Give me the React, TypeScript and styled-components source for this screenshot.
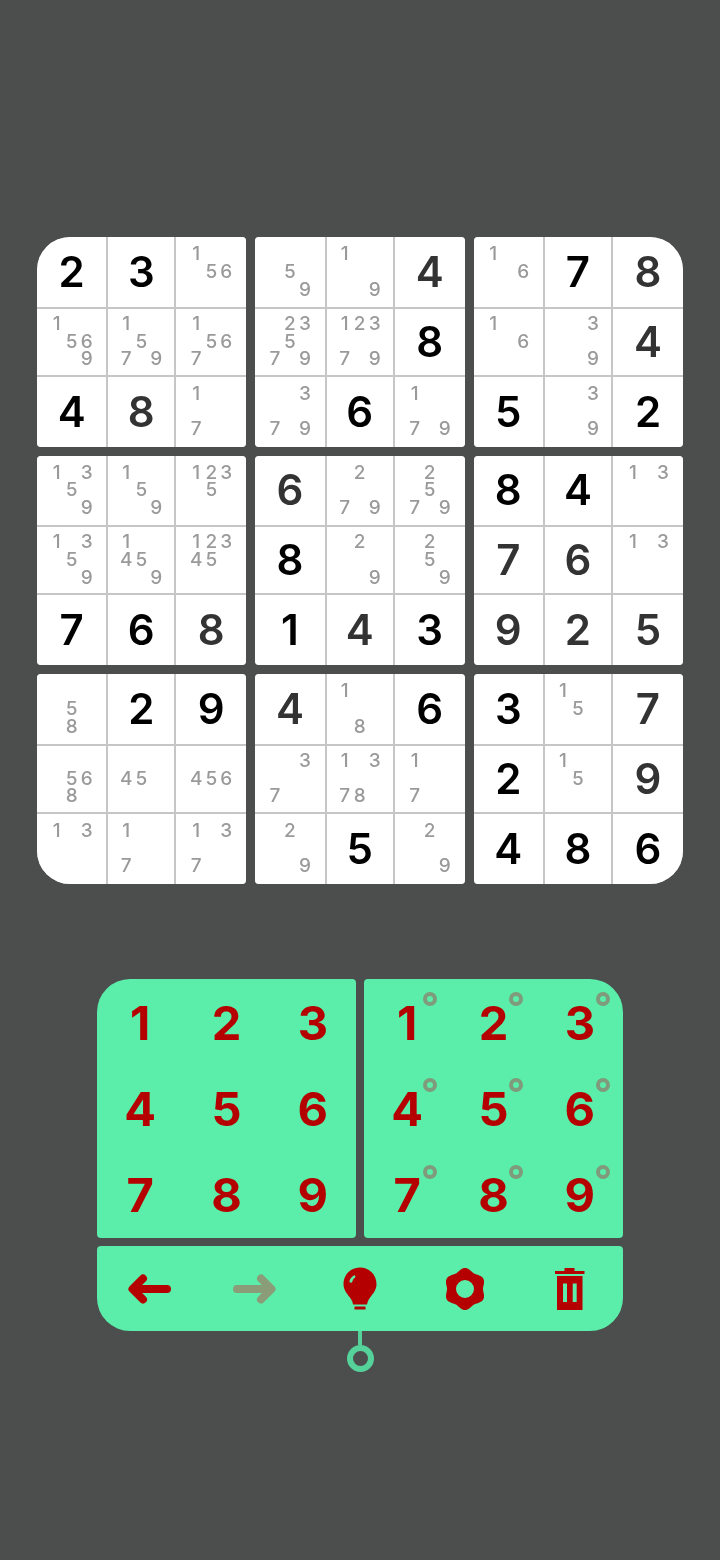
import React from 'react';
import styled, { createGlobalStyle } from 'styled-components';

const colors = {
  background: '#4c4e4e',
  line: '#c6c6c6',
  note: '#9a9a9a',
  black: '#000000',
  dark: '#333333',
  green: '#5bedaa',
  red: '#b40000',
  muted: '#8b9c79',
  mark: '#7f9b7c',
  indicator: '#55d29a',
};

// b = given (black), d = placed (dark grey), n = pencil marks
const rows = [
  ['b2', 'b3', 'n156', 'n59', 'n19', 'd4', 'n16', 'b7', 'd8'],
  ['n1569', 'n1579', 'n1567', 'n23579', 'n12379', 'b8', 'n16', 'n39', 'd4'],
  ['b4', 'd8', 'n17', 'n379', 'b6', 'n179', 'b5', 'n39', 'b2'],
  ['n1359', 'n159', 'n1235', 'd6', 'n279', 'n2579', 'b8', 'b4', 'n13'],
  ['n1359', 'n1459', 'n12345', 'b8', 'n29', 'n259', 'd7', 'd6', 'n13'],
  ['b7', 'b6', 'd8', 'b1', 'd4', 'b3', 'd9', 'd2', 'd5'],
  ['n58', 'b2', 'b9', 'd4', 'n18', 'b6', 'b3', 'n15', 'd7'],
  ['n568', 'n45', 'n456', 'n37', 'n1378', 'n17', 'b2', 'n15', 'd9'],
  ['n13', 'n17', 'n137', 'n29', 'b5', 'n29', 'b4', 'b8', 'b6'],
];

const boxRadius: Record<number, string> = {
  0: '33px 4px 4px 4px',
  2: '4px 33px 4px 4px',
  6: '4px 4px 4px 33px',
  8: '4px 4px 33px 4px',
};

const digits = ['1', '2', '3', '4', '5', '6', '7', '8', '9'];

function cellsOfBox(box: number) {
  const top = Math.floor(box / 3) * 3;
  const left = (box % 3) * 3;
  return [0, 1, 2].flatMap((r) => [0, 1, 2].map((c) => rows[top + r][left + c]));
}

function gearPath() {
  const points: string[] = [];
  for (let i = 0; i < 120; i++) {
    const angle = (i / 120) * Math.PI * 2;
    const radius = 19.5 + 1.5 * Math.cos(6 * angle);
    const x = 20 + radius * Math.sin(angle);
    const y = 21 - radius * Math.cos(angle);
    points.push(`${x.toFixed(2)} ${y.toFixed(2)}`);
  }
  return `M${points.join('L')}Z M29 21A9 9 0 1 0 11 21A9 9 0 1 0 29 21Z`;
}

function Cell({ value }: { value: string }) {
  const kind = value[0];
  const body = value.slice(1);
  if (kind === 'n') {
    return (
      <CellBox>
        <NoteGrid>
          {digits.map((d) => (
            <Note key={d}>{body.includes(d) ? d : ''}</Note>
          ))}
        </NoteGrid>
      </CellBox>
    );
  }
  return (
    <CellBox>
      <Value $dark={kind === 'd'}>{body}</Value>
    </CellBox>
  );
}

function BackArrow({ color }: { color: string }) {
  return (
    <svg width="43" height="30" viewBox="0 0 43 30" fill="none">
      <path
        d="M39 15H5M15 4.5L4.5 15L15 25.5"
        stroke={color}
        strokeWidth="8"
        strokeLinecap="round"
        strokeLinejoin="round"
      />
    </svg>
  );
}

function App() {
  return (
    <Page>
      <GlobalStyle />
      <Board>
        {[0, 1, 2, 3, 4, 5, 6, 7, 8].map((box) => (
          <Box key={box} $radius={boxRadius[box] || '4px'}>
            {cellsOfBox(box).map((value, i) => (
              <Cell key={i} value={value} />
            ))}
          </Box>
        ))}
      </Board>

      <Controls>
        <Pad $radius="33px 4px 4px 4px">
          {digits.map((d) => (
            <Key key={d}>{d}</Key>
          ))}
        </Pad>
        <Pad $radius="4px 33px 4px 4px">
          {digits.map((d) => (
            <Key key={d}>
              {d}
              <KeyMark />
            </Key>
          ))}
        </Pad>
        <Toolbar>
          <Tool>
            <BackArrow color={colors.red} />
          </Tool>
          <Tool>
            <Flipped>
              <BackArrow color={colors.muted} />
            </Flipped>
          </Tool>
          <Tool>
            <svg width="34" height="43" viewBox="0 0 34 43">
              <path
                fill={colors.red}
                d="M17 .5C26 .5 33.5 7.5 33.5 17C33.5 23 30 26.5 27.5 30C26 32 24.5 34 24 37.5H10C9.5 34 8 32 6.5 30C4 26.5 .5 23 .5 17C.5 7.5 8 .5 17 .5Z"
              />
              <path fill={colors.red} d="M11.5 39.5H22.5V42.5H11.5Z" />
              <path fill="none" stroke={colors.green} strokeWidth="2.5" d="M7.5 15.5C8 12.5 9.5 10.5 12 9" />
            </svg>
          </Tool>
          <Tool>
            <svg width="40" height="42" viewBox="0 0 40 42">
              <path fill={colors.red} fillRule="evenodd" d={gearPath()} />
            </svg>
          </Tool>
          <Tool>
            <svg width="30" height="42" viewBox="0 0 30 42">
              <path
                fill={colors.red}
                fillRule="evenodd"
                d="M9.5 0H19.5V3H29.5V6H0V3H9.5ZM2 8H27.5V42H2ZM8 15.5V34H12V15.5ZM17.7 15.5V34H21.7V15.5Z"
              />
            </svg>
          </Tool>
        </Toolbar>
      </Controls>

      <Indicator>
        <IndicatorLine />
        <IndicatorRing />
      </Indicator>
    </Page>
  );
}

const GlobalStyle = createGlobalStyle`
  body {
    margin: 0;
    background: ${colors.background};
    font-family: Inter, "Liberation Sans", sans-serif;
  }
`;

const Page = styled.div`
  width: 720px;
  height: 1560px;
  box-sizing: border-box;
  padding-top: 237px;
  background: ${colors.background};
  display: flex;
  flex-direction: column;
  align-items: center;
`;

const Board = styled.div`
  display: grid;
  grid-template-columns: repeat(3, 209.33px);
  grid-template-rows: repeat(3, 209.5px);
  gap: 9px;
  will-change: transform;
`;

const Box = styled.div<{ $radius: string }>`
  display: grid;
  grid-template-columns: 69.3px 66px 70.03px;
  grid-template-rows: 69.5px 66px 70px;
  gap: 2px;
  background: ${colors.line};
  border-radius: ${(p) => p.$radius};
  overflow: hidden;
`;

const CellBox = styled.div`
  background: #ffffff;
  display: flex;
  align-items: center;
  justify-content: center;
  overflow: hidden;
`;

const Value = styled.span<{ $dark: boolean }>`
  font-size: 42px;
  line-height: 1;
  font-weight: 600;
  color: ${(p) => (p.$dark ? colors.dark : colors.black)};
`;

const NoteGrid = styled.div`
  display: grid;
  grid-template-columns: repeat(3, 15px);
  grid-template-rows: repeat(3, 17.7px);
`;

const Note = styled.span`
  font-size: 19px;
  line-height: 17.7px;
  font-weight: 500;
  text-align: center;
  color: ${colors.note};
`;

const Controls = styled.div`
  margin-top: 95.5px;
  width: 526px;
  display: grid;
  grid-template-columns: 259px 259px;
  gap: 8px;
  will-change: transform;
`;

const Pad = styled.div<{ $radius: string }>`
  height: 259px;
  display: grid;
  grid-template-columns: repeat(3, 1fr);
  grid-template-rows: repeat(3, 1fr);
  background: ${colors.green};
  border-radius: ${(p) => p.$radius};
`;

const Key = styled.div`
  position: relative;
  display: flex;
  align-items: center;
  justify-content: center;
  font-size: 47px;
  line-height: 1;
  font-weight: 650;
  color: ${colors.red};
`;

const KeyMark = styled.span`
  position: absolute;
  left: calc(50% + 16px);
  top: calc(50% - 30px);
  width: 14px;
  height: 14px;
  box-sizing: border-box;
  border: 4px solid ${colors.mark};
  border-radius: 50%;
`;

const Toolbar = styled.div`
  grid-column: 1 / -1;
  height: 85px;
  display: flex;
  background: ${colors.green};
  border-radius: 4px 4px 33px 33px;
`;

const Tool = styled.div`
  flex: 1;
  display: flex;
  align-items: center;
  justify-content: center;
`;

const Flipped = styled.span`
  display: flex;
  transform: scaleX(-1);
`;

const Indicator = styled.div`
  display: flex;
  flex-direction: column;
  align-items: center;
`;

const IndicatorLine = styled.div`
  width: 4px;
  height: 14px;
  background: ${colors.indicator};
`;

const IndicatorRing = styled.div`
  width: 27px;
  height: 27px;
  box-sizing: border-box;
  border: 6px solid ${colors.indicator};
  border-radius: 50%;
`;

export default App;
